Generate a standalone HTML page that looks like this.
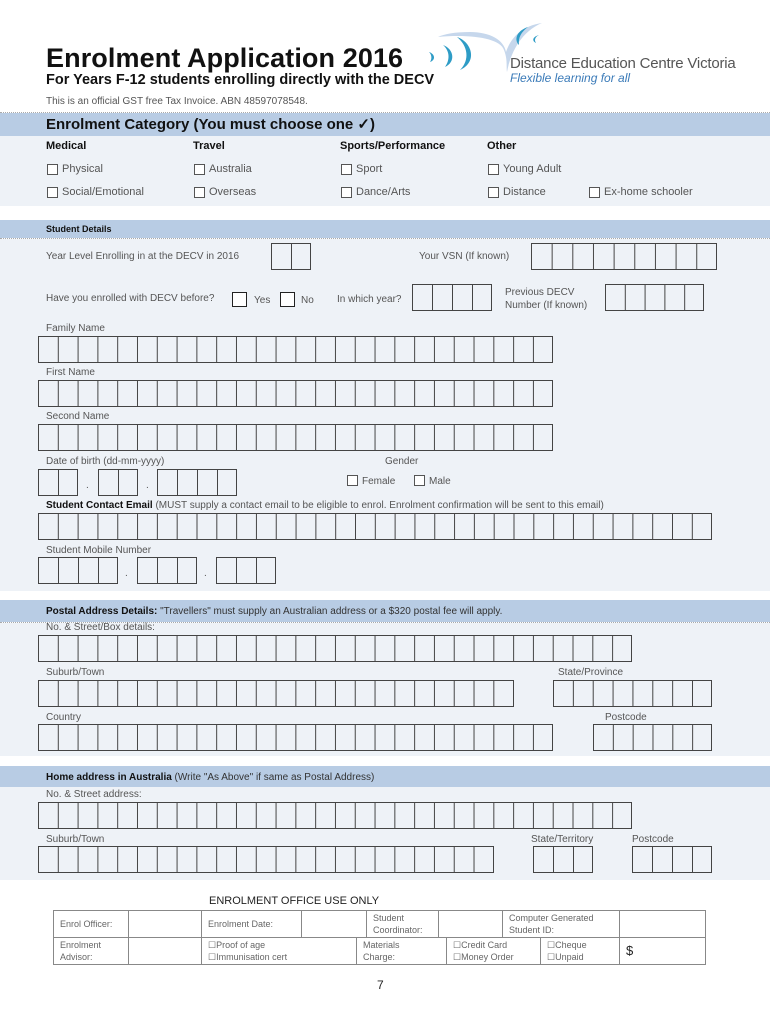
<!DOCTYPE html>
<html><head><meta charset="utf-8"><style>
*{margin:0;padding:0;box-sizing:border-box}
body{width:770px;height:1024px;position:relative;background:#fff;font-family:"Liberation Sans",sans-serif;color:#555;overflow:hidden}
.a{position:absolute;white-space:nowrap}
.l{font-size:10px;color:#555}
.b{font-weight:bold;color:#111}
.band{position:absolute;left:0;width:770px;background:#b8cce4}
.lt{position:absolute;left:0;width:770px;background:#eef2f7}
.bx{position:absolute;height:27px;border:1px solid #444;border-left:none;background-image:linear-gradient(to right,#444 1px,transparent 1px);background-size:19.8px 100%}
.cb{position:absolute;width:11px;height:11px;border:1px solid #555;background:#fff}
.ck{font-size:11px;color:#555}
table{position:absolute;left:53px;top:910px;width:653px;border-collapse:collapse;font-size:9px;color:#666}
td{border:1px solid #888;padding:1px 6px;line-height:12px;vertical-align:middle}
</style></head><body>

<div class="a b" style="left:46px;top:43px;font-size:27px;letter-spacing:0.1px">Enrolment Application 2016</div>
<div class="a b" style="left:46px;top:72px;font-size:14.5px;">For Years F-12 students enrolling directly with the DECV</div>
<div class="a" style="left:46px;top:96px;font-size:10px;color:#555">This is an official GST free Tax Invoice. ABN 48597078548.</div>

<svg class="a" style="left:420px;top:20px" width="130" height="60" viewBox="0 0 130 60">
<path d="M18 17 C50 14 80 18 84 30 C88 40 86 48 87 52 C90 35 100 12 122 3 C100 6 90 20 86 32 C84 20 70 12 50 12 C35 12 24 14 18 17Z" fill="#c6d7ec"/>
<path d="M37 17 C52 22 58 42 40 50 C50 40 48 26 37 17Z" fill="#2e9cc6"/>
<path d="M23 25 C34 29 36 42 25 47 C30 40 30 31 23 25Z" fill="#2e9cc6"/>
<path d="M9 32 C15 34 16 40 10 42 C12 39 12 35 9 32Z" fill="#2e9cc6"/>
<path d="M108 7 C96 11 94 20 99 25 C98 18 101 12 108 7Z" fill="#2e9cc6"/>
<path d="M119 15 C112 17 112 21 116 23 C114 20 115 17 119 15Z" fill="#2e9cc6"/>
</svg>
<div class="a" style="left:510px;top:55px;font-size:15px;color:#555;letter-spacing:-0.2px">Distance Education Centre Victoria</div>
<div class="a" style="left:510px;top:71px;font-size:12px;color:#3a7ab8;font-style:italic">Flexible learning for all</div>

<div style="position:absolute;left:0;top:112px;width:770px;border-top:1px dotted #aaa"></div>
<div class="band" style="top:113px;height:23px"></div>
<div class="a b" style="left:46px;top:115px;font-size:15px;">Enrolment Category (You must choose one ✓)</div>
<div class="lt" style="top:136px;height:70px"></div>
<div class="a b" style="left:46px;top:140px;font-size:11px">Medical</div>
<div class="a b" style="left:193px;top:140px;font-size:11px">Travel</div>
<div class="a b" style="left:340px;top:140px;font-size:11px">Sports/Performance</div>
<div class="a b" style="left:487px;top:140px;font-size:11px">Other</div>

<div class="cb" style="left:47px;top:164px"></div><div class="a ck" style="left:62px;top:163px">Physical</div>
<div class="cb" style="left:194px;top:164px"></div><div class="a ck" style="left:209px;top:163px">Australia</div>
<div class="cb" style="left:341px;top:164px"></div><div class="a ck" style="left:356px;top:163px">Sport</div>
<div class="cb" style="left:488px;top:164px"></div><div class="a ck" style="left:503px;top:163px">Young Adult</div>
<div class="cb" style="left:47px;top:187px"></div><div class="a ck" style="left:62px;top:186px">Social/Emotional</div>
<div class="cb" style="left:194px;top:187px"></div><div class="a ck" style="left:209px;top:186px">Overseas</div>
<div class="cb" style="left:341px;top:187px"></div><div class="a ck" style="left:356px;top:186px">Dance/Arts</div>
<div class="cb" style="left:488px;top:187px"></div><div class="a ck" style="left:503px;top:186px">Distance</div>
<div class="cb" style="left:589px;top:187px"></div><div class="a ck" style="left:604px;top:186px">Ex-home schooler</div>

<div class="band" style="top:220px;height:18px"></div>
<div class="a b" style="left:46px;top:224px;font-size:9px">Student Details</div>
<div style="position:absolute;left:0;top:238px;width:770px;border-top:1px dotted #aaa"></div>
<div class="lt" style="top:239px;height:352px"></div>

<div class="a l" style="left:46px;top:251px">Year Level Enrolling in at the DECV in 2016</div>
<div class="bx" style="left:271px;top:243px;width:40px;background-size:20px 100%"></div>
<div class="a l" style="left:419px;top:251px">Your VSN (If known)</div>
<div class="bx" style="left:531px;top:243px;width:186px;background-size:20.67px 100%"></div>

<div class="a l" style="left:46px;top:293px">Have you enrolled with DECV before?</div>
<div class="cb" style="left:232px;top:292px;width:15px;height:15px;border:1.5px solid #222"></div><div class="a l" style="left:254px;top:295px">Yes</div>
<div class="cb" style="left:280px;top:292px;width:15px;height:15px;border:1.5px solid #222"></div><div class="a l" style="left:301px;top:295px">No</div>
<div class="a l" style="left:337px;top:294px">In which year?</div>
<div class="bx" style="left:412px;top:284px;width:80px;background-size:20px 100%"></div>
<div class="a l" style="left:505px;top:286px;line-height:13px">Previous DECV<br>Number (If known)</div>
<div class="bx" style="left:605px;top:284px;width:99px;background-size:19.8px 100%"></div>

<div class="a l" style="left:46px;top:323px">Family Name</div>
<div class="bx" style="left:38px;top:336px;width:515px"></div>
<div class="a l" style="left:46px;top:367px">First Name</div>
<div class="bx" style="left:38px;top:380px;width:515px"></div>
<div class="a l" style="left:46px;top:411px">Second Name</div>
<div class="bx" style="left:38px;top:424px;width:515px"></div>

<div class="a l" style="left:46px;top:456px">Date of birth (dd-mm-yyyy)</div>
<div class="bx" style="left:38px;top:469px;width:40px;background-size:20px 100%"></div>
<div class="a l" style="left:86px;top:480px">.</div>
<div class="bx" style="left:98px;top:469px;width:40px;background-size:20px 100%"></div>
<div class="a l" style="left:146px;top:480px">.</div>
<div class="bx" style="left:157px;top:469px;width:80px;background-size:20px 100%"></div>
<div class="a l" style="left:385px;top:456px">Gender</div>
<div class="cb" style="left:347px;top:475px"></div><div class="a l" style="left:362px;top:476px">Female</div>
<div class="cb" style="left:414px;top:475px"></div><div class="a l" style="left:429px;top:476px">Male</div>

<div class="a l" style="left:46px;top:500px"><b style="color:#111">Student Contact Email</b> (MUST supply a contact email to be eligible to enrol. Enrolment confirmation will be sent to this email)</div>
<div class="bx" style="left:38px;top:513px;width:674px;background-size:19.82px 100%"></div>

<div class="a l" style="left:46px;top:545px">Student Mobile Number</div>
<div class="bx" style="left:38px;top:557px;width:80px;background-size:20px 100%"></div>
<div class="a l" style="left:125px;top:568px">.</div>
<div class="bx" style="left:137px;top:557px;width:60px;background-size:20px 100%"></div>
<div class="a l" style="left:204px;top:568px">.</div>
<div class="bx" style="left:216px;top:557px;width:60px;background-size:20px 100%"></div>

<div class="band" style="top:600px;height:22px"></div>
<div class="a l" style="left:46px;top:606px;color:#333"><b style="color:#111">Postal Address Details:</b> "Travellers" must supply an Australian address or a $320 postal fee will apply.</div>
<div style="position:absolute;left:0;top:622px;width:770px;border-top:1px dotted #aaa"></div>
<div class="lt" style="top:623px;height:133px"></div>
<div class="a l" style="left:46px;top:622px">No. &amp; Street/Box details:</div>
<div class="bx" style="left:38px;top:635px;width:594px"></div>
<div class="a l" style="left:46px;top:667px">Suburb/Town</div>
<div class="bx" style="left:38px;top:680px;width:476px"></div>
<div class="a l" style="left:558px;top:667px">State/Province</div>
<div class="bx" style="left:553px;top:680px;width:159px;background-size:19.87px 100%"></div>
<div class="a l" style="left:46px;top:712px">Country</div>
<div class="bx" style="left:38px;top:724px;width:515px"></div>
<div class="a l" style="left:605px;top:712px">Postcode</div>
<div class="bx" style="left:593px;top:724px;width:119px;background-size:19.83px 100%"></div>

<div class="band" style="top:766px;height:21px"></div>
<div class="a l" style="left:46px;top:772px;color:#333"><b style="color:#111">Home address in Australia</b> (Write "As Above" if same as Postal Address)</div>
<div class="lt" style="top:787px;height:93px"></div>
<div class="a l" style="left:46px;top:789px">No. &amp; Street address:</div>
<div class="bx" style="left:38px;top:802px;width:594px"></div>
<div class="a l" style="left:46px;top:834px">Suburb/Town</div>
<div class="bx" style="left:38px;top:846px;width:456px"></div>
<div class="a l" style="left:531px;top:834px">State/Territory</div>
<div class="bx" style="left:533px;top:846px;width:60px;background-size:20px 100%"></div>
<div class="a l" style="left:632px;top:834px">Postcode</div>
<div class="bx" style="left:632px;top:846px;width:80px;background-size:20px 100%"></div>

<div class="a" style="left:209px;top:895px;font-size:11px;color:#222">ENROLMENT OFFICE USE ONLY</div>
<table>
<tr style="height:27px"><td style="width:75px">Enrol Officer:</td><td style="width:73px"></td><td style="width:100px">Enrolment Date:</td><td style="width:65px"></td><td style="width:72px">Student<br>Coordinator:</td><td style="width:64px"></td><td style="width:117px">Computer Generated<br>Student ID:</td><td></td></tr>
</table>
<table style="top:937px">
<tr style="height:26px"><td style="width:75px">Enrolment<br>Advisor:</td><td style="width:73px"></td><td style="width:155px">☐Proof of age<br>☐Immunisation cert</td><td style="width:90px">Materials<br>Charge:</td><td style="width:94px">☐Credit Card<br>☐Money Order</td><td style="width:79px">☐Cheque<br>☐Unpaid</td><td style="font-size:13px;color:#222">$</td></tr>
</table>

<div class="a" style="left:377px;top:978px;font-size:12px;color:#222">7</div>
</body></html>
